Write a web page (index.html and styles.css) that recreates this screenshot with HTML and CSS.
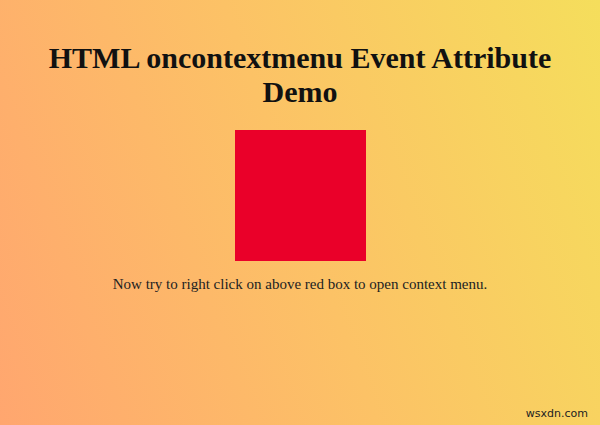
FILE: index.html
```html
<!DOCTYPE html>
<html>
<head>
<meta charset="utf-8">
<link rel="stylesheet" href="styles.css">
</head>
<body>
<main class="page">
  <h1 class="title">HTML oncontextmenu Event Attribute Demo</h1>
  <div class="box"></div>
  <p class="note">Now try to right click on above red box to open context menu.</p>
  <span class="mark">wsxdn.com</span>
</main>
</body>
</html>
```
FILE: styles.css
```css
html, body {
  margin: 0;
  padding: 0;
}
body {
  width: 600px;
  height: 425px;
  overflow: hidden;
  font-family: "Liberation Serif", "Times New Roman", serif;
  background: linear-gradient(70deg, #ffa66f 0%, #fcc266 50%, #f5de5c 100%);
}
.page {
  position: relative;
  height: 425px;
  display: flex;
  flex-direction: column;
  align-items: center;
  padding-top: 41px;
  box-sizing: border-box;
}
.title {
  margin: 0;
  width: 540px;
  font-size: 30px;
  line-height: 34px;
  font-weight: bold;
  text-align: center;
  color: #111;
}
.box {
  width: 131px;
  height: 131px;
  margin-top: 21px;
  background: #ea0029;
}
.note {
  margin: 15px 0 0;
  font-size: 15px;
  line-height: 17px;
  color: #222;
}
.mark {
  position: absolute;
  right: 12px;
  bottom: 5px;
  font-family: "DejaVu Sans", sans-serif;
  font-size: 11px;
  color: #222;
}
```
